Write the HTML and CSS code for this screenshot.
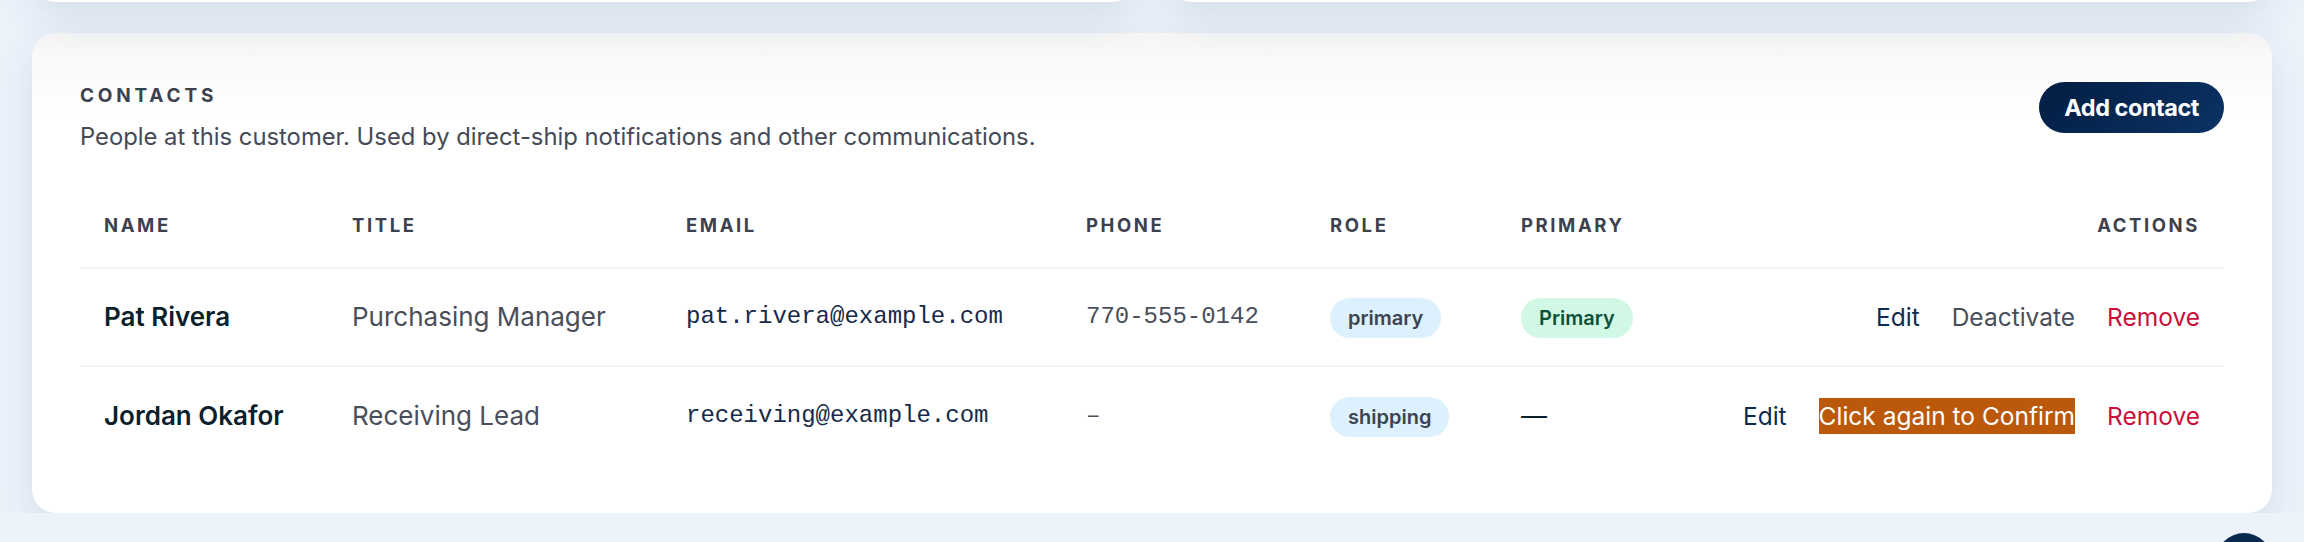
FILE: index.html
```html
<!DOCTYPE html>
<html>
<head>
    <title>Customer Contacts</title>
    <link rel="stylesheet" href="styles.css">
</head>
<body>
    <div class="page">
        <div class="summary-grid">
            <div class="summary-card"></div>
            <div class="summary-card"></div>
        </div>

        <section class="card">
            <div class="card-header">
                <div>
                    <h2 class="eyebrow">Contacts</h2>
                    <p class="subtitle">People at this customer. Used by direct-ship notifications and other communications.</p>
                </div>
                <button class="btn-primary" type="button">Add contact</button>
            </div>

            <table class="contacts">
                <colgroup>
                    <col class="col-name">
                    <col class="col-title">
                    <col class="col-email">
                    <col class="col-phone">
                    <col class="col-role">
                    <col class="col-primary">
                    <col>
                </colgroup>
                <thead>
                    <tr>
                        <th>Name</th>
                        <th>Title</th>
                        <th>Email</th>
                        <th>Phone</th>
                        <th>Role</th>
                        <th>Primary</th>
                        <th class="right">Actions</th>
                    </tr>
                </thead>
                <tbody>
                    <tr>
                        <td class="name">Pat Rivera</td>
                        <td class="title">Purchasing Manager</td>
                        <td class="email">pat.rivera@example.com</td>
                        <td class="phone">770-555-0142</td>
                        <td><span class="pill pill-role">primary</span></td>
                        <td><span class="pill pill-primary">Primary</span></td>
                        <td class="right">
                            <div class="actions">
                                <button class="link link-edit" type="button">Edit</button>
                                <button class="link link-muted" type="button">Deactivate</button>
                                <button class="link link-danger" type="button">Remove</button>
                            </div>
                        </td>
                    </tr>
                    <tr>
                        <td class="name">Jordan Okafor</td>
                        <td class="title">Receiving Lead</td>
                        <td class="email">receiving@example.com</td>
                        <td class="phone">–</td>
                        <td><span class="pill pill-role">shipping</span></td>
                        <td class="none">—</td>
                        <td class="right">
                            <div class="actions">
                                <button class="link link-edit" type="button">Edit</button>
                                <button class="link link-confirm" type="button">Click again to Confirm</button>
                                <button class="link link-danger" type="button">Remove</button>
                            </div>
                        </td>
                    </tr>
                </tbody>
            </table>
        </section>
    </div>

    <button class="fab" type="button" aria-label="Help"></button>
</body>
</html>
```

FILE: styles.css
```css
/* page shell */
body {
    margin: 0;
    background: #ecf3fb;
    font-family: Inter, "Noto Sans", sans-serif;
    overflow: hidden;
}

.page {
    padding: 0 32px;
}

/* the row of cards above, scrolled mostly out of view */
.summary-grid {
    display: grid;
    grid-template-columns: 1fr 1fr;
    gap: 32px;
    margin-top: -198px;
    margin-bottom: 31px;
}

.summary-card {
    height: 200px;
    background: #fff;
    border-radius: 24px;
    box-shadow: 0 16px 44px rgba(25, 55, 95, 0.11);
}

/* contacts card */
.card {
    background: linear-gradient(180deg, #f6f6f6 0, #fff 80px);
    border-radius: 24px;
    padding: 49px 48px;
    box-shadow: 0 16px 44px rgba(25, 55, 95, 0.11);
}

.card-header {
    display: flex;
    justify-content: space-between;
    align-items: flex-start;
}

.eyebrow {
    margin: 0;
    font-size: 19px;
    line-height: 28px;
    font-weight: 700;
    letter-spacing: 0.2em;
    text-transform: uppercase;
    color: #3d414d;
}

.subtitle {
    margin: 10px 0 0;
    font-size: 23.8px;
    line-height: 34px;
    color: #464a56;
}

.btn-primary {
    height: 51px;
    padding: 0 25px;
    border: none;
    border-radius: 26px;
    background: linear-gradient(135deg, #021d42, #0b3364);
    color: #fff;
    font-family: Inter, sans-serif;
    font-size: 23.5px;
    font-weight: 700;
    letter-spacing: -0.02em;
    cursor: pointer;
}

/* table */
.contacts {
    width: 100%;
    margin-top: 30px;
    border-collapse: collapse;
    table-layout: fixed;
}

.col-name { width: 248px; }
.col-title { width: 334px; }
.col-email { width: 400px; }
.col-phone { width: 244px; }
.col-role { width: 191px; }
.col-primary { width: 220px; }

.contacts th {
    padding: 30px 24px 30.5px;
    line-height: 22px;
    font-size: 18.5px;
    font-weight: 700;
    letter-spacing: 0.14em;
    text-transform: uppercase;
    text-align: left;
    color: #3d414d;
    border-bottom: 2px solid #f1f2f4;
}

.contacts td {
    padding: 27.5px 24px;
    line-height: 40px;
    font-size: 26px;
    white-space: nowrap;
    border-bottom: 2px solid #f3f4f6;
}

.contacts tbody tr:last-child td {
    border-bottom: none;
}

.contacts .right {
    text-align: right;
}

.name {
    font-weight: 600;
    color: #0c1f2c;
}

.title {
    color: #4a4e5a;
}

.contacts .email,
.contacts .phone {
    font-family: "Liberation Mono", monospace;
    font-size: 24px;
}

.email {
    color: #172a4a;
}

.phone {
    color: #4a4e5a;
}

.none {
    color: #0c1f2c;
}

/* pills */
.pill {
    display: inline-block;
    height: 40px;
    padding: 0 18px;
    border-radius: 20px;
    font-size: 20px;
    font-weight: 600;
    line-height: 40px;
    vertical-align: middle;
}

.pill-role {
    background: #dcf0fe;
    color: #3e4350;
}

.pill-primary {
    background: #d1f8e5;
    color: #0c5139;
}

/* row actions */
.actions {
    display: flex;
    justify-content: flex-end;
    align-items: center;
    gap: 32px;
}

.link {
    padding: 0;
    border: none;
    background: none;
    font-family: Inter, sans-serif;
    font-size: 24.5px;
    line-height: 36px;
    cursor: pointer;
}

.link-edit { color: #0f2a4f; }
.link-muted { color: #4a4e5a; }
.link-danger { color: #c8103a; }

.link-confirm {
    background: #bb5809;
    color: #fff;
}

/* floating help button, mostly below the fold */
.fab {
    position: fixed;
    right: 32px;
    bottom: -47px;
    width: 56px;
    height: 56px;
    border: none;
    border-radius: 50%;
    background: #0b2a50;
}
```
